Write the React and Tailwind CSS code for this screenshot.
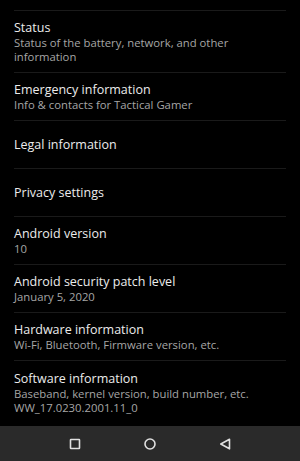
import React from "react";

const items = [
  { t: "Emergency information", s: ["Info & contacts for Tactical Gamer"] },
  { t: "Legal information" },
  { t: "Privacy settings" },
  { t: "Android version", s: ["10"] },
  { t: "Android security patch level", s: ["January 5, 2020"] },
  { t: "Hardware information", s: ["Wi-Fi, Bluetooth, Firmware version, etc."] },
];

function Row({ t, s }) {
  return (
    <div className="border-t border-[#1a1a1a] flex flex-col justify-center h-[48px] shrink-0">
      <div className="text-[12.5px] leading-[17px] text-[#ececec] font-medium">{t}</div>
      {s &&
        s.map((l, i) => (
          <div key={i} className="text-[11.3px] leading-[14px] text-[#a6a6a6]">
            {l}
          </div>
        ))}
    </div>
  );
}

export default function App() {
  return (
    <div
      className="w-[300px] h-[461px] bg-black flex flex-col overflow-hidden"
      style={{ fontFamily: '"Open Sans", "Noto Sans", sans-serif' }}
    >
      <div className="flex-1 flex flex-col px-[14px] overflow-hidden">
        <div className="h-[10px] shrink-0" />
        <div className="border-t border-[#1a1a1a] flex flex-col justify-center h-[62px] shrink-0">
          <div className="text-[12.5px] leading-[17px] text-[#ececec] font-medium">Status</div>
          <div className="text-[11.3px] leading-[14px] text-[#a6a6a6]">
            Status of the battery, network, and other
            <br />
            information
          </div>
        </div>
        {items.map((it, i) => (
          <Row key={i} {...it} />
        ))}
        <div className="border-t border-[#1a1a1a] flex flex-col pt-[9px] shrink-0">
          <div className="text-[12.5px] leading-[17px] text-[#ececec] font-medium">Software information</div>
          <div className="text-[11.3px] leading-[14px] text-[#a6a6a6]">
            Baseband, kernel version, build number, etc.
          </div>
          <div className="text-[11.3px] leading-[14px] text-[#a6a6a6]">WW_17.0230.2001.11_0</div>
        </div>
      </div>
      <div className="h-[35px] shrink-0 bg-[#2a2a2a] flex items-center justify-center gap-[61px]">
        <svg width="14" height="14" viewBox="0 0 14 14">
          <rect x="2.5" y="2.5" width="9" height="9" rx="0.5" fill="none" stroke="#e0e0e0" strokeWidth="1.6" />
        </svg>
        <svg width="14" height="14" viewBox="0 0 14 14">
          <circle cx="7" cy="7" r="5" fill="none" stroke="#e0e0e0" strokeWidth="1.6" />
        </svg>
        <svg width="14" height="14" viewBox="0 0 14 14">
          <path d="M11.5 2.2 L2.8 7 L11.5 11.8 Z" fill="none" stroke="#e0e0e0" strokeWidth="1.6" strokeLinejoin="round" />
        </svg>
      </div>
    </div>
  );
}
